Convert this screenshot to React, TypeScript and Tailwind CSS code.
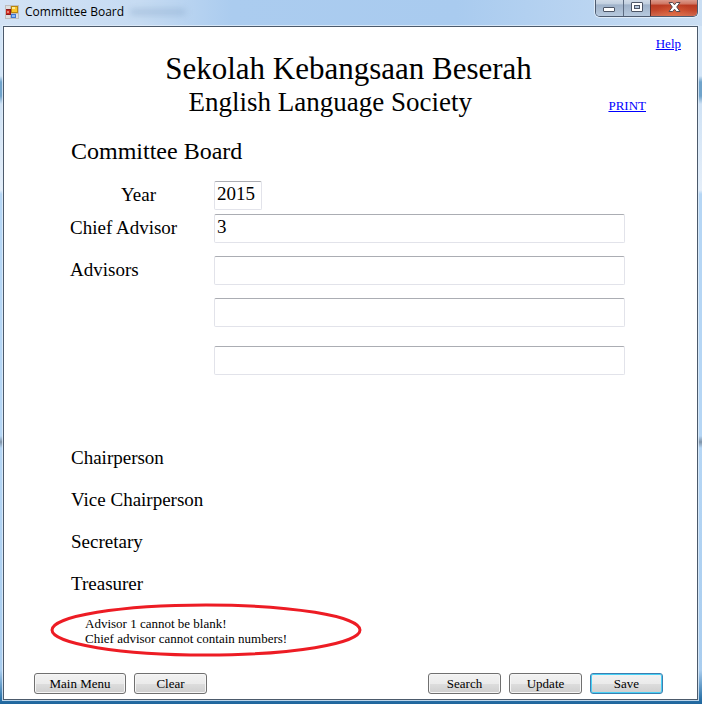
import type { ReactNode } from "react";

function FormIcon() {
  return (
    <svg width="14" height="14" viewBox="0 0 14 14" aria-hidden="true">
      <rect width="14" height="14" fill="#bdbdbd" />
      <rect x="1" y="1" width="4" height="3" fill="#dedede" />
      <rect x="1" y="10" width="4" height="3" fill="#dedede" />
      <rect x="11" y="9" width="2" height="4" fill="#dedede" />
      <rect x="1" y="4" width="5" height="6" fill="#8f1a1a" />
      <rect x="1" y="5" width="4" height="4" fill="#c8281f" />
      <rect x="2" y="6" width="2" height="2" fill="#e88474" />
      <rect x="6" y="1" width="7" height="7" fill="#b8860f" />
      <rect x="7" y="2" width="5" height="5" fill="#fbc62c" />
      <rect x="7" y="2" width="3" height="2" fill="#ffec94" />
      <rect x="6" y="9" width="5" height="4" fill="#3f76d0" />
      <rect x="7" y="10" width="3" height="2" fill="#8ab8f8" />
    </svg>
  );
}

function TitleBar() {
  return (
    <header className="flex h-[26px] items-start justify-between bg-[linear-gradient(90deg,#d3e3f5_0%,#c6dbf2_20%,#abccef_33%,#a9cbef_65%,#bbd5f1_85%,#cadef3_100%)] pl-[5px] pr-1">
      <div className="flex h-6 items-center gap-[6px]">
        <FormIcon />
        <span className="font-['Open_Sans',sans-serif] text-[12px] leading-4 text-black">
          Committee Board
        </span>
        <span className="h-[6px] w-14 rounded-full bg-[#7f9fc2]/40 blur-[3px]" />
      </div>
      <div className="flex h-[17px] overflow-hidden rounded-b-[5px] border border-t-0 border-[#4d5b70] shadow-[0_0_0_1px_rgba(255,255,255,0.5)]">
        <button
          aria-label="Minimize"
          className="flex w-7 items-center justify-center border-r border-[#5d6c82] bg-[linear-gradient(180deg,#d0dbe8_0%,#c1cfdf_25%,#9fb2c9_30%,#b7c9de_100%)]"
        >
          <svg width="13" height="16" viewBox="0 0 13 16">
            <rect x="0.5" y="7.5" width="11" height="4" rx="0.5" fill="#fff" stroke="#4c5566" />
          </svg>
        </button>
        <button
          aria-label="Maximize"
          className="flex w-[27px] items-center justify-center border-r border-[#5d2a26] bg-[linear-gradient(180deg,#d0dbe8_0%,#c1cfdf_25%,#9fb2c9_30%,#b7c9de_100%)]"
        >
          <svg width="13" height="16" viewBox="0 0 13 16">
            <rect x="0.5" y="2.5" width="11" height="9" rx="0.5" fill="#fff" stroke="#4c5566" />
            <rect x="3.5" y="5.5" width="5" height="3" fill="#b5c6da" stroke="#4c5566" />
          </svg>
        </button>
        <button
          aria-label="Close"
          className="flex w-[46px] items-center justify-center bg-[radial-gradient(ellipse_at_50%_100%,rgba(240,120,70,0.5)_0%,rgba(240,120,70,0)_60%),linear-gradient(180deg,#dc9a8c_0%,#cf7562_25%,#b93a22_32%,#c4472c_65%,#d0694f_100%)]"
        >
          <svg width="13" height="16" viewBox="0 0 13 16">
            <path
              d="M1 2.5H4.6L6.5 4.8L8.4 2.5H12L8.7 7L12 11.5H8.4L6.5 9.2L4.6 11.5H1L4.3 7Z"
              fill="#fff"
              stroke="#54474f"
              strokeLinejoin="round"
            />
          </svg>
        </button>
      </div>
    </header>
  );
}

const field =
  "h-[29px] rounded-[2px] border border-[#e2e3ea] border-t-[#abadb3] bg-white px-[2px] pb-[3px] text-[19px] leading-6 text-black outline-none";

type ActionProps = { children: ReactNode; primary?: boolean; wide?: boolean };

function Action({ children, primary = false, wide = false }: ActionProps) {
  const width = wide ? "w-[92px]" : "w-[73px]";
  const edge = primary
    ? "border-[#3c7fb1] shadow-[inset_0_0_0_1px_#48d0f5]"
    : "border-[#707070] shadow-[inset_0_0_0_1px_#f6f6f6]";
  return (
    <button
      className={`h-[21px] rounded-[3px] border bg-[linear-gradient(180deg,#f2f2f2_0%,#ebebeb_50%,#dddddd_52%,#cfcfcf_100%)] text-[13px] leading-4 text-black ${width} ${edge}`}
    >
      {children}
    </button>
  );
}

export default function App() {
  return (
    <div className="flex min-h-screen flex-col bg-[linear-gradient(180deg,#d3e5f7_0px,#d3e5f7_76px,#6fa3cb_82px,#6fa3cb_96px,#cfe2f5_104px,#e4eef9_190px,#b5d6f5_194px,#b5d6f5_436px,#7f93a8_442px,#b5d6f5_448px,#a9cdef_670px,#2a72a8_699px,#1f659c_100%)] font-['Liberation_Serif',serif] text-black">
      <TitleBar />
      <main className="mb-1 ml-[3px] mr-1 flex grow flex-col border border-[#4c5a6b] bg-white shadow-[0_0_0_1px_rgba(225,238,250,0.8)]">
        <div className="flex justify-end pr-4 pt-[9px] text-[13px] leading-4">
          <a href="#help" className="text-[#0000ff] underline">
            Help
          </a>
        </div>
        <h1 className="pr-1 text-center text-[31px] leading-[33px]">Sekolah Kebangsaan Beserah</h1>
        <div className="flex items-center pl-12 pr-[51px]">
          <h2 className="flex-1 text-center text-[27px] leading-[34px]">English Language Society</h2>
          <a href="#print" className="mt-2 text-[13px] leading-4 text-[#0000ff] underline">
            PRINT
          </a>
        </div>

        <form className="flex grow flex-col" onSubmit={(e) => e.preventDefault()}>
          <h3 className="mt-[18px] pl-[67px] text-[24px] leading-7">Committee Board</h3>

          <div className="mt-4 grid grid-cols-[144px_1fr] items-center pl-[66px] pr-[72px] text-[19px] leading-6">
            <label htmlFor="year" className="pb-[2px] pl-[51px]">
              Year
            </label>
            <input id="year" defaultValue="2015" className={`${field} w-12`} />
            <label htmlFor="chief" className="mt-1 pb-[2px]">
              Chief Advisor
            </label>
            <input id="chief" defaultValue="3" className={`${field} mt-1 w-full`} />
            <label htmlFor="advisor1" className="mt-[13px] pb-[2px]">
              Advisors
            </label>
            <input id="advisor1" className={`${field} mt-[13px] w-full`} />
            <input aria-label="Advisor 2" className={`${field} col-start-2 mt-[13px] w-full`} />
            <input aria-label="Advisor 3" className={`${field} col-start-2 mt-[19px] w-full`} />
          </div>

          <div className="mt-[71px] flex flex-col gap-[18px] pl-[67px] text-[19px] leading-6">
            <p>Chairperson</p>
            <p>Vice Chairperson</p>
            <p>Secretary</p>
            <p>Treasurer</p>
          </div>

          <div className="relative ml-[46px] mt-[7px] h-[54px] w-[312px] pl-[35px] pt-[13px] text-[13px] leading-[15px]">
            <p>Advisor 1 cannot be blank!</p>
            <p>Chief advisor cannot contain numbers!</p>
            <svg
              className="pointer-events-none absolute inset-0"
              width="312"
              height="54"
              viewBox="0 0 312 54"
              aria-hidden="true"
            >
              <ellipse cx="156" cy="27" rx="154" ry="25" fill="none" stroke="#ed1c24" strokeWidth="3" />
            </svg>
          </div>

          <div className="mt-auto flex justify-between pb-[5px] pl-[30px] pr-[34px]">
            <div className="flex gap-2">
              <Action wide>Main Menu</Action>
              <Action>Clear</Action>
            </div>
            <div className="flex gap-2">
              <Action>Search</Action>
              <Action>Update</Action>
              <Action primary>Save</Action>
            </div>
          </div>
        </form>
      </main>
    </div>
  );
}
